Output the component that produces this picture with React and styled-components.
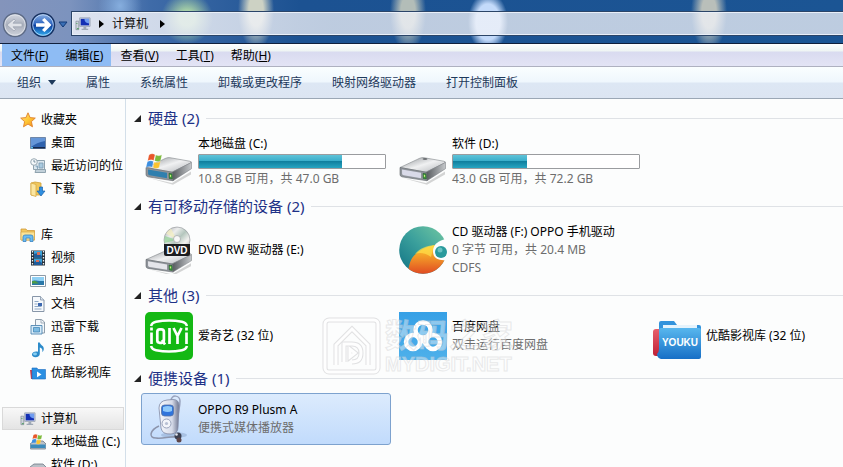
import React from 'react'
import styled, { createGlobalStyle } from 'styled-components'

/* ---------- icons ---------- */

const BackIcon = () => (
    <svg width="26" height="26" viewBox="0 0 26 26">
        <defs>
            <linearGradient id="back" x1="0" y1="0" x2="0" y2="1">
                <stop offset="0" stopColor="#d5d9e2" />
                <stop offset=".5" stopColor="#a9afbc" />
                <stop offset="1" stopColor="#cfd3dc" />
            </linearGradient>
        </defs>
        <circle cx="13" cy="13" r="11.5" fill="url(#back)" stroke="#5d6b86" strokeWidth="1.4" />
        <circle cx="13" cy="13" r="10.2" fill="none" stroke="#e8ebf1" strokeOpacity=".7" />
        <path d="M5 13l7-6 1.500 1.500-2.500 2.700h9v3.600h-9l2.500 2.700L12 19z" fill="#dfe2e8" stroke="#9aa1af" strokeWidth=".7" />
    </svg>
)

const ForwardIcon = () => (
    <svg width="26" height="26" viewBox="0 0 26 26">
        <defs>
            <linearGradient id="fwd" x1="0" y1="0" x2="0" y2="1">
                <stop offset="0" stopColor="#8fb4e6" />
                <stop offset=".45" stopColor="#2f66c0" />
                <stop offset=".52" stopColor="#0e3f9e" />
                <stop offset="1" stopColor="#35b5f5" />
            </linearGradient>
        </defs>
        <circle cx="13" cy="13" r="11.5" fill="url(#fwd)" stroke="#16305f" strokeWidth="1.4" />
        <circle cx="13" cy="13" r="10.3" fill="none" stroke="#cfe3fb" strokeOpacity=".75" />
        <path d="M21.500 13L14.500 6l-2.500 2 3 3.200H6v3.600h9L12 18l2.500 2z" fill="#fff" />
    </svg>
)

const HistoryIcon = () => (
    <svg width="10" height="7" viewBox="0 0 10 7">
        <path d="M1 1h8L5 6z" fill="#3a6fb5" stroke="#123a78" />
    </svg>
)

const ComputerIcon = () => (
    <svg width="16" height="16" viewBox="0 0 17 16">
        <path d="M1 5h3v9H1z" fill="#cfd5dc" stroke="#7b8694" strokeWidth=".7" />
        <path d="M2 7v1M2 13h2" stroke="#3b9a4a" strokeWidth="1" />
        <path d="M5 1.5h11v9H5z" fill="#dfe4ea" stroke="#8a96a8" strokeWidth=".8" />
        <path d="M6 2.5h9v7H6z" fill="#1430b4" />
        <path d="M10 2.5h5v5c-3 0-5-2-5-5z" fill="#6f9cf0" />
        <path d="M9 11h3v2H9zM7 13h7v1.5H7z" fill="#9fa9b6" />
    </svg>
)

const StarIcon = () => (
    <svg width="16" height="16" viewBox="0 0 16 16">
        <defs>
            <linearGradient id="star" x1="0" y1="0" x2="1" y2="1">
                <stop offset="0" stopColor="#ffe08a" />
                <stop offset=".5" stopColor="#ffc835" />
                <stop offset="1" stopColor="#f08a1c" />
            </linearGradient>
        </defs>
        <path
            d="M8 .8l2.1 4.8 5.2.5-3.9 3.5 1.1 5.2L8 12.1l-4.5 2.7 1.1-5.2L.7 6.1l5.2-.5z"
            fill="url(#star)"
            stroke="#e0802a"
            strokeWidth=".9"
        />
    </svg>
)

const DesktopIcon = () => (
    <svg width="16" height="16" viewBox="0 0 16 16">
        <path d="M.5 2.5h15v11H.5z" fill="#2f62ad" stroke="#6f87a8" />
        <path d="M1 3h14v3C9 7 5 9 1 12z" fill="#6596d8" />
        <path d="M1 12h14v1.5H1z" fill="#16294d" />
        <path d="M1 12h2v1.5H1z" fill="#5fc0e8" />
    </svg>
)

const RecentIcon = () => (
    <svg width="16" height="16" viewBox="0 0 16 16">
        <path d="M3.5 2.5h11v9h-11z" fill="#dbe7ee" stroke="#8fa3af" />
        <path d="M5 14.5h10.500v-3H6z" fill="#c2d1da" stroke="#8fa3af" />
        <path d="M9 5h4v5H9zM5.500 8h2v3" fill="#a9cbe0" stroke="#7c9bb0" strokeWidth=".8" />
        <circle cx="4" cy="4" r="3.300" fill="#f4f8fa" stroke="#9aaab4" />
        <path d="M4 2v2h1.500" fill="none" stroke="#5d7a8c" strokeWidth=".8" />
    </svg>
)

const DownloadIcon = () => (
    <svg width="16" height="16" viewBox="0 0 16 16">
        <path d="M1 2l4-1 6 1v12H1z" fill="#f0c75c" stroke="#cf9f35" strokeWidth=".8" />
        <path d="M1 2l5 1.500V15.500L1 14z" fill="#fbe6a0" stroke="#d8ab45" strokeWidth=".8" />
        <path d="M9.500 6h3v4H15l-4 5-4-5h2.500z" fill="#2f8fe0" stroke="#1b62ab" strokeWidth=".7" />
    </svg>
)

const LibraryIcon = () => (
    <svg width="16" height="16" viewBox="0 0 16 16">
        <path d="M1 2h5l1 1.500h7.500V13H1z" fill="#f2c860" stroke="#d09b38" strokeWidth=".8" />
        <path d="M1 5h13.500v8H1z" fill="#fbe396" stroke="#d9a94a" strokeWidth=".7" />
        <path d="M3 14.500V10q0-2 2-2h6q2 0 2 2v4.500h-3V11H6v3.500z" fill="#6cbcf0" stroke="#3784c4" strokeWidth=".8" />
    </svg>
)

const VideoIcon = () => (
    <svg width="16" height="16" viewBox="0 0 16 16">
        <path d="M1 .5h14v15H1z" fill="#26313a" />
        <path d="M4 1h8v6.500H4zM4 8.500h8V15H4z" fill="#3aa1d8" />
        <path d="M4 4l4-1 4 3v1.500H4zM4 12l4-2 4 3v2H4z" fill="#1f5c9a" />
        <path d="M7 2h3v3H7zM6 10h3v2H6z" fill="#d5705a" />
        <path d="M2.500 1v14M13.500 1v14" stroke="#eef2f4" strokeWidth="1.300" strokeDasharray="1.500 1.500" />
    </svg>
)

const PictureIcon = () => (
    <svg width="16" height="16" viewBox="0 0 16 16">
        <path d="M.5 2.500h15v11H.5z" fill="#fff" stroke="#8d9aa6" />
        <path d="M2 4h12v8H2z" fill="#8fd0f4" />
        <path d="M2 8c3-1.500 6 .5 12 0v4H2z" fill="#2a78a8" />
        <path d="M2 8.500c3-2 5 1 7 2H2z" fill="#4c9c46" />
    </svg>
)

const DocumentIcon = () => (
    <svg width="16" height="16" viewBox="0 0 16 16">
        <path d="M2.500.5h8l3.500 3.500v11.500H2.500z" fill="#f6f9fc" stroke="#8796a8" />
        <path d="M10.500.5V4H14" fill="#dce5ee" stroke="#8796a8" strokeWidth=".8" />
        <path d="M4.500 5.500h4M4.500 8h3M4.500 10.500h7M4.500 13h7" stroke="#8fa8c4" />
        <path d="M8 7h4v3H8z" fill="#3c68b0" />
    </svg>
)

const ThunderIcon = () => (
    <svg width="16" height="16" viewBox="0 0 16 16">
        <path d="M5.500.5h6L14.500 3v11h-9z" fill="#f3f7fa" stroke="#8e9dab" />
        <path d="M11 .5V4h3.500" fill="none" stroke="#8e9dab" strokeWidth=".8" />
        <path d="M1 6.500h11v8.500H1z" fill="#d7ebf8" stroke="#4f87b2" strokeWidth=".9" />
        <path d="M3.500 8.500h6v4.500h-6z" fill="#7dbbe2" stroke="#3b7fb0" strokeWidth=".7" />
    </svg>
)

const MusicIcon = () => (
    <svg width="16" height="16" viewBox="0 0 16 16">
        <path d="M8 .5h1.800c.2 2.500 4.200 3 4 6.500-.1 1.500-.8 2.500-1.600 3 .8-2.800-.5-4-2.400-4.600v6.400c0 2-1.800 3.400-4.300 3.400S1.800 14 2 12.300c.2-1.900 2.700-3.300 6-2.600z" fill="#2c8bca" />
        <ellipse cx="5" cy="12" rx="2" ry="1.400" fill="#85cdf2" />
    </svg>
)

const YoukuFolderIcon = () => (
    <svg width="16" height="16" viewBox="0 0 16 16">
        <path d="M0 5h6v9H1z" fill="#d33b46" />
        <path d="M2 3h5l1 1.500h7.500V14H2z" fill="#2b8fe2" stroke="#1b6cc0" strokeWidth=".6" />
        <path d="M7 6.500l4.500 3L7 12.300z" fill="#fff" />
    </svg>
)

/** the four coloured panes on the system drive */
const WindowsFlag = () => (
    <g stroke="#fff" strokeOpacity=".5" strokeWidth=".4">
        <path d="M5 3c2-1.500 4-1.500 6-.3L9.700 8.500C8 7.400 6 7.500 3.700 8.800z" fill="#e8572a" />
        <path d="M11.800 3c2 1 4 1 6-.2l-1.200 5.700c-2 1.300-4 1.400-6 .3z" fill="#7dbb3c" />
        <path d="M3.400 9.800c2.200-1.300 4.200-1.300 6-.3l-1.300 5.700c-1.800-1-3.800-.9-6.100.3z" fill="#3b8ee0" />
        <path d="M10.300 9.900c2 1 4 1 6.100-.3l-1.300 5.800c-2 1.300-4 1.300-6.100.2z" fill="#fbc32e" />
    </g>
)

const SmallDriveIcon = ({ system }) => (
    <svg width="16" height="16" viewBox="0 0 16 16">
        <path d="M0 10l4-3h9l3 3v4q0 1-1 1H1q-1 0-1-1z" fill="#b9c0c7" stroke="#6e7a86" strokeWidth=".8" />
        <path d="M.5 10.500h15V14H.5z" fill={system ? '#3c8bbb' : '#e6e9ec'} />
        {system && <g transform="translate(0 -1) scale(.68)"><WindowsFlag /></g>}
    </svg>
)

const DriveBody = ({ id, front }) => (
    <>
        <defs>
            <linearGradient id={id} x1="0" y1="0" x2="1" y2="1">
                <stop offset="0" stopColor="#8e9296" />
                <stop offset=".5" stopColor="#f0f1f2" />
                <stop offset="1" stopColor="#b1b4b8" />
            </linearGradient>
            <linearGradient id={id + 's'} x1="0" y1="0" x2="1" y2="0">
                <stop offset="0" stopColor="#55595d" />
                <stop offset="1" stopColor="#c5c8cb" />
            </linearGradient>
        </defs>
        <path d="M3 38l24 7 19-15v4L28 47z" fill="#000" opacity=".16" />
        <path d="M1 25L21 13q2-1 4-.6L45 17q2 .6 1 2L27 31z" fill={`url(#${id})`} stroke="#85898d" strokeWidth=".7" />
        <path d="M27 31L46.500 18.500v8L28 42z" fill={`url(#${id}s)`} stroke="#777b80" strokeWidth=".6" />
        <path d="M1 25l26 6 1 11-25-5q-2-.6-2-3z" fill="#8f949a" stroke="#666b70" strokeWidth=".7" />
        <path d="M3 27.500l19 4.200v7L4.600 35q-1.400-.4-1.500-2z" fill={front} />
        <path d="M24 32.500l3 .7.300 6.500-3-.6z" fill="#3f9a3f" stroke="#1e5222" strokeWidth=".6" />
        <path d="M25.500 34.500v2.500" stroke="#c9f27a" strokeWidth="1.200" />
    </>
)

const DriveIcon = ({ system }) => (
    <svg width="48" height="48" viewBox="0 0 48 48">
        <g transform="translate(0 10) scale(1 .78)">
            <DriveBody id={system ? 'dc' : 'dd'} front={system ? '#2f7fae' : '#d9dae8'} />
            {!system && <ellipse cx="26" cy="14" rx="2.500" ry="1" fill="#4d5156" />}
        </g>
        {system && <g transform="translate(-1 14) scale(1)"><WindowsFlag /></g>}
    </svg>
)

const DvdIcon = () => (
    <svg width="48" height="48" viewBox="0 0 48 48">
        <defs>
            <linearGradient id="disc" x1="0" y1="0" x2="1" y2="1">
                <stop offset="0" stopColor="#a6a9ac" />
                <stop offset=".3" stopColor="#eceded" />
                <stop offset=".5" stopColor="#b4c6bd" />
                <stop offset=".7" stopColor="#f2f1ef" />
                <stop offset="1" stopColor="#9c9fa2" />
            </linearGradient>
        </defs>
        <g transform="translate(0 15) scale(1 .74)"><DriveBody id="dv" front="#e4e5ea" /></g>
        <circle cx="32" cy="14" r="13" fill="url(#disc)" stroke="#8b8f93" strokeWidth=".6" />
        <path d="M32 14L21 7.500A13 13 0 0 1 26 2.700z" fill="#f5efbf" opacity=".7" />
        <path d="M32 14l-12.500 3a13 13 0 0 1 .5-7z" fill="#8fd093" opacity=".7" />
        <circle cx="32" cy="13" r="3.500" fill="#f7f7f7" stroke="#a6a9ac" strokeWidth=".8" />
        <path d="M19 18h26v10q0 2-2 2H21q-2 0-2-2z" fill="#1c1d20" />
        <text x="32" y="28" textAnchor="middle" fontFamily="Liberation Sans" fontWeight="700" fontSize="10" fill="#fff">DVD</text>
    </svg>
)

const OppoIcon = () => (
    <svg width="48" height="48" viewBox="0 0 48 48">
        <defs>
            <linearGradient id="teal" x1="0" y1="1" x2="1" y2="0">
                <stop offset="0" stopColor="#0f7183" />
                <stop offset=".5" stopColor="#3a9f9c" />
                <stop offset="1" stopColor="#74c9a2" />
            </linearGradient>
            <linearGradient id="sun" x1="0" y1="0" x2="0" y2="1">
                <stop offset="0" stopColor="#ffd02c" />
                <stop offset="1" stopColor="#e04a22" />
            </linearGradient>
            <clipPath id="globe"><circle cx="24" cy="24" r="23.800" /></clipPath>
        </defs>
        <g clipPath="url(#globe)">
            <path d="M0 0h48v48H0z" fill="url(#teal)" />
            <path d="M9 46c1-8 3-15 9-19 6-5 10-6 18-8h12v29H9z" fill="url(#sun)" />
            <path d="M16 28c5-6 11-8 19-9l-3 12c-5-4-11-5-16-3z" fill="#ffe04a" opacity=".7" />
        </g>
        <path d="M48 13c-9 1-14 6-14 12 0 7 5 10 14 9z" fill="#fcfdfd" />
        <circle cx="42" cy="26" r="6" fill="#2a9a9c" />
        <circle cx="41" cy="24" r="2.500" fill="#69c2c2" />
    </svg>
)

const IqiyiIcon = () => (
    <svg width="48" height="48" viewBox="0 0 48 48">
        <rect width="48" height="48" rx="5" fill="#14b814" />
        <path d="M6 14q1-3.500 5-4.200 13-2.500 26 0 4 .7 5 4.200M6 34q1 3.500 5 4.200 13 2.500 26 0 4-.7 5-4.200" fill="none" stroke="#fff" strokeWidth="2.500" />
        <g fill="none" stroke="#fff" strokeWidth="2.700">
            <path d="M6.500 20.500V32M6.500 15.500v3" />
            <rect x="12.300" y="17.300" width="6.600" height="13.500" rx="2.500" />
            <path d="M17 28l3 4.500M24.500 16v16M28.500 16l4 8 4-8M32.500 23v9M41.500 20.500V32M41.500 15.500v3" />
        </g>
    </svg>
)

const BaiduPanIcon = () => (
    <svg width="48" height="48" viewBox="0 0 48 48">
        <defs>
            <linearGradient id="pan" x1="0" y1="0" x2="0" y2="1">
                <stop offset="0" stopColor="#35a0e6" />
                <stop offset="1" stopColor="#4db0ea" />
            </linearGradient>
        </defs>
        <rect width="48" height="48" fill="url(#pan)" />
        <g fill="none" stroke="#fff" strokeWidth="4.500">
            <circle cx="24" cy="18" r="7.500" />
            <circle cx="14" cy="30" r="7" />
            <circle cx="34" cy="30" r="7" />
        </g>
        <path d="M18 23l12 12" stroke="#fff" strokeWidth="4" />
    </svg>
)

const YoukuIcon = () => (
    <svg width="48" height="48" viewBox="0 0 48 48">
        <defs>
            <linearGradient id="yk" x1="0" y1="0" x2="0" y2="1">
                <stop offset="0" stopColor="#58b7ee" />
                <stop offset="1" stopColor="#176fc6" />
            </linearGradient>
            <linearGradient id="ykr" x1="0" y1="0" x2="0" y2="1">
                <stop offset="0" stopColor="#e8606c" />
                <stop offset="1" stopColor="#bf2036" />
            </linearGradient>
        </defs>
        <path d="M0 20q0-3 3-3h12v27H3q-3 0-3-3z" fill="url(#ykr)" />
        <path d="M6 11q0-2 2-2h13l3 4h22q2 0 2 2v20H6z" fill="#3393dc" />
        <path d="M10 13h34v8H10z" fill="#e5f3fc" />
        <path d="M6 18q0-2 2-2h38q2 0 2 2v27q0 2-2 2H8q-4-1-4-5 2-2 2-5z" fill="url(#yk)" />
        <text x="27" y="34" textAnchor="middle" fontFamily="Liberation Sans" fontWeight="700" fontSize="10" fill="#fff">YOUKU</text>
    </svg>
)

const PlayerIcon = () => (
    <svg width="48" height="48" viewBox="0 0 48 48">
        <defs>
            <linearGradient id="mp" x1="0" y1="0" x2="1" y2="0">
                <stop offset="0" stopColor="#f6f8fc" />
                <stop offset=".65" stopColor="#d7dcea" />
                <stop offset="1" stopColor="#6f7690" />
            </linearGradient>
        </defs>
        <ellipse cx="29" cy="40" rx="13" ry="3" fill="#4e6a98" opacity=".25" />
        <path d="M26 6c0-7 9-6 9 0 0 7-2 11-2 16" fill="none" stroke="#98a2bd" strokeWidth="1.500" />
        <path d="M14 13q0-7 8-8l6-.5q6 0 6 6l-1 22q0 6-7 6.500-9 .5-10-6z" fill="url(#mp)" stroke="#8089a4" strokeWidth=".8" />
        <rect x="16.500" y="10" width="12" height="11" rx="3" fill="#2f74dc" stroke="#5672a4" strokeWidth=".8" />
        <path d="M18 12q5-2 9 0v4q-4 2-9 0z" fill="#8fc9fb" />
        <circle cx="21.500" cy="28.500" r="4.500" fill="#f3f5fa" stroke="#9aa3bb" />
        <circle cx="21.500" cy="28.500" r="1.600" fill="#b8c0d4" />
        <path d="M14 31c-9 4-11 12-3 12 8 1 13-2 22-1" fill="none" stroke="#8c94ab" strokeWidth="1.500" />
        <circle cx="33" cy="41" r="3.500" fill="#3b3f50" />
        <circle cx="34" cy="45" r="2.500" fill="#5d4548" />
        <circle cx="31.500" cy="39.500" r="1.300" fill="#e6e9f2" />
    </svg>
)

const WatermarkLogo = () => (
    <svg width="60" height="60" viewBox="0 0 60 60" fill="none">
        <g stroke="#d6d6d8" strokeWidth="5">
            <rect x="3" y="3" width="53" height="52" rx="4" />
            <path d="M14 48V28L30 12l16 16v20" />
            <path d="M22 45V27h8q9 0 9 9t-9 9M28 32v8l5-4z" />
        </g>
        <g stroke="#fff" strokeWidth="3">
            <rect x="3" y="3" width="53" height="52" rx="4" />
            <path d="M14 48V28L30 12l16 16v20" />
            <path d="M22 45V27h8q9 0 9 9t-9 9M28 32v8l5-4z" />
        </g>
    </svg>
)

/* ---------- data ---------- */

const menus = [
    { text: '文件', mnemonic: 'F', active: true },
    { text: '编辑', mnemonic: 'E', active: true },
    { text: '查看', mnemonic: 'V' },
    { text: '工具', mnemonic: 'T' },
    { text: '帮助', mnemonic: 'H' },
]

const commands = ['属性', '系统属性', '卸载或更改程序', '映射网络驱动器', '打开控制面板']

const sidebarGroups = [
    {
        icon: <StarIcon />,
        text: '收藏夹',
        items: [
            { icon: <DesktopIcon />, text: '桌面' },
            { icon: <RecentIcon />, text: '最近访问的位' },
            { icon: <DownloadIcon />, text: '下载' },
        ],
    },
    {
        icon: <LibraryIcon />,
        text: '库',
        items: [
            { icon: <VideoIcon />, text: '视频' },
            { icon: <PictureIcon />, text: '图片' },
            { icon: <DocumentIcon />, text: '文档' },
            { icon: <ThunderIcon />, text: '迅雷下载' },
            { icon: <MusicIcon />, text: '音乐' },
            { icon: <YoukuFolderIcon />, text: '优酷影视库' },
        ],
    },
    {
        icon: <ComputerIcon />,
        text: '计算机',
        current: true,
        items: [
            { icon: <SmallDriveIcon system />, text: '本地磁盘 (C:)' },
            { icon: <SmallDriveIcon />, text: '软件 (D:)' },
        ],
    },
]

const deviceGroups = [
    {
        title: '硬盘 (2)',
        items: [
            { icon: <DriveIcon system />, name: '本地磁盘 (C:)', used: 77, info: ['10.8 GB 可用，共 47.0 GB'] },
            { icon: <DriveIcon />, name: '软件 (D:)', used: 40, info: ['43.0 GB 可用，共 72.2 GB'] },
        ],
    },
    {
        title: '有可移动存储的设备 (2)',
        items: [
            { icon: <DvdIcon />, name: 'DVD RW 驱动器 (E:)' },
            { icon: <OppoIcon />, name: 'CD 驱动器 (F:) OPPO 手机驱动', info: ['0 字节 可用，共 20.4 MB', 'CDFS'] },
        ],
    },
    {
        title: '其他 (3)',
        watermark: true,
        items: [
            { icon: <IqiyiIcon />, name: '爱奇艺 (32 位)' },
            { icon: <BaiduPanIcon />, name: '百度网盘', info: ['双击运行百度网盘'] },
            { icon: <YoukuIcon />, name: '优酷影视库 (32 位)' },
        ],
    },
    {
        title: '便携设备 (1)',
        items: [
            { icon: <PlayerIcon />, name: 'OPPO R9 Plusm A', info: ['便携式媒体播放器'], selected: true },
        ],
    },
]

/* ---------- parts ---------- */

const Device = ({ item }) => (
    <DeviceTile $selected={item.selected}>
        {item.icon}
        <DeviceText>
            <DeviceName>{item.name}</DeviceName>
            {item.used && (
                <CapacityBar role="progressbar" aria-label={item.name} aria-valuenow={item.used}>
                    <CapacityFill style={{ width: `${item.used}%` }} />
                </CapacityBar>
            )}
            {item.info?.map(line => <DeviceInfo key={line}>{line}</DeviceInfo>)}
        </DeviceText>
    </DeviceTile>
)

const App = () => {
    return (
        <Window>
            <GlobalStyle />
            <TitleBar>
                <NavButton aria-label="后退"><BackIcon /></NavButton>
                <NavButton aria-label="前进"><ForwardIcon /></NavButton>
                <NavButton aria-label="最近的页面"><HistoryIcon /></NavButton>
                <AddressBar>
                    <ComputerIcon />
                    <Arrow />
                    <Crumb>计算机</Crumb>
                    <Arrow />
                </AddressBar>
            </TitleBar>
            <MenuBar>
                {menus.map(menu => (
                    <MenuButton key={menu.text} $active={menu.active}>
                        {menu.text}(<u>{menu.mnemonic}</u>)
                    </MenuButton>
                ))}
            </MenuBar>
            <Toolbar>
                <ToolButton>组织<DownArrow /></ToolButton>
                {commands.map(text => <ToolButton key={text}>{text}</ToolButton>)}
            </Toolbar>
            <Body>
                <Sidebar>
                    {sidebarGroups.map(group => (
                        <SidebarGroup key={group.text}>
                            <SidebarRow $root $current={group.current}>{group.icon}{group.text}</SidebarRow>
                            {group.items.map(item => (
                                <SidebarRow key={item.text}>{item.icon}{item.text}</SidebarRow>
                            ))}
                        </SidebarGroup>
                    ))}
                </Sidebar>
                <Content>
                    {deviceGroups.map(group => (
                        <Group key={group.title}>
                            <GroupHeader><Expander />{group.title}<Rule /></GroupHeader>
                            <DeviceGrid>
                                {group.items.map(item => <Device key={item.name} item={item} />)}
                            </DeviceGrid>
                            {group.watermark && (
                                <Watermark>
                                    <WatermarkLogo />
                                    <div>
                                        <WatermarkName>数码之家</WatermarkName>
                                        <WatermarkSite>MYDIGIT.NET</WatermarkSite>
                                    </div>
                                </Watermark>
                            )}
                        </Group>
                    ))}
                </Content>
            </Body>
        </Window>
    )
}

export default App

const GlobalStyle = createGlobalStyle`
    * {
        box-sizing: border-box;
    }

    body {
        margin: 0;
        font-family: "Noto Sans", "Noto Sans CJK SC", sans-serif;
        font-size: 12px;
        line-height: 18px;
        color: #000;
    }

    button {
        border: 0;
        padding: 0;
        background: none;
        font: inherit;
        color: inherit;
    }

    svg {
        display: block;
        flex: none;
    }
`

const Window = styled.div`
    display: flex;
    flex-direction: column;
    height: 100vh;
    overflow: hidden;
    background: #fcfdfd;
`

const TitleBar = styled.header`
    display: flex;
    align-items: center;
    gap: 2px;
    height: 44px;
    flex: none;
    padding: 6px 0 0 2px;
    border-bottom: 1px solid #10203c;
    background:
        radial-gradient(ellipse 22px 26px at 120px 6px, #86aede, transparent),
        radial-gradient(ellipse 26px 26px at 187px 18px, #a5cfa6 30%, transparent),
        radial-gradient(ellipse 18px 40px at 256px 10px, #cdd2c4 40%, transparent),
        radial-gradient(ellipse 18px 40px at 408px 12px, #b3bdb8 40%, transparent),
        radial-gradient(ellipse 20px 30px at 488px 22px, #c3dafa 60%, transparent),
        radial-gradient(ellipse 18px 40px at 709px 12px, #b9bfba 40%, transparent),
        linear-gradient(90deg, #8494bb 0, #7c93be 70px, #3f6ba8 150px, #1c5292 300px, #1b5594 100%);
`

const NavButton = styled.button`
    display: grid;
    place-items: center;
`

const AddressBar = styled.nav`
    display: flex;
    align-items: center;
    gap: 8px;
    flex: 1;
    height: 23px;
    margin: 0 0 2px 2px;
    padding-left: 2px;
    border: 1px solid #e9eff8;
    border-right: 0;
    outline: 1px solid #2b4568;
    background: linear-gradient(90deg, rgba(240, 242, 248, 0.85) 0, rgba(240, 242, 248, 0.76) 260px);
`

const Arrow = styled.span`
    border: 4px solid transparent;
    border-left: 5px solid #000;
    border-right: 0;
`

const Crumb = styled.button`
    padding-right: 4px;
    color: #111;
`

const MenuBar = styled.nav`
    display: flex;
    height: 23px;
    flex: none;
    padding-left: 2px;
    border-bottom: 1px solid #aeb1c0;
    background: linear-gradient(#fff 0, #eef5f4 7px, #d9dbf0 8px, #e3e4f5 100%);
`

const MenuButton = styled.button`
    padding: 2px 8px 0 9px;
    background: ${({ $active }) => ($active ? '#8ebcf4' : 'none')};
`

const Toolbar = styled.div`
    display: flex;
    align-items: center;
    gap: 30px;
    height: 32px;
    flex: none;
    padding-left: 17px;
    border-bottom: 1px solid #9ba7b5;
    color: #1e395b;
    background: linear-gradient(#fafeff 0, #eff7fd 15px, #dde7f4 16px, #dce5f2 100%);
`

const ToolButton = styled.button`
    display: flex;
    align-items: center;
    gap: 7px;
    white-space: nowrap;
`

const DownArrow = styled.span`
    border: 4px solid transparent;
    border-top: 5px solid #1e395b;
    border-bottom: 0;
`

const Body = styled.div`
    display: flex;
    flex: 1;
    min-height: 0;
`

const Sidebar = styled.aside`
    display: flex;
    flex-direction: column;
    gap: 23px;
    width: 126px;
    flex: none;
    padding: 9px 1px 0 2px;
    overflow: hidden;
    border-right: 1px solid #d3dfe9;
`

const SidebarGroup = styled.div`
    display: flex;
    flex-direction: column;
`

const SidebarRow = styled.button`
    display: flex;
    align-items: center;
    gap: 5px;
    height: 23px;
    flex: none;
    padding-left: ${({ $root }) => ($root ? '17px' : '27px')};
    border: 1px solid ${({ $current }) => ($current ? '#d9d9d9' : 'transparent')};
    background: ${({ $current }) => ($current ? 'linear-gradient(#f8f8f8, #e4e4e4)' : 'none')};
    white-space: nowrap;
`

const Content = styled.main`
    flex: 1;
    min-width: 0;
    padding: 7px 0 0 8px;
    overflow: hidden;
`

const Group = styled.section`
    position: relative;
    padding-bottom: 4px;
`

const GroupHeader = styled.h2`
    display: flex;
    align-items: center;
    gap: 7px;
    height: 24px;
    margin: 0 0 3px;
    font-size: 15px;
    font-weight: 400;
    color: #1e3287;
    white-space: nowrap;
`

const Expander = styled.span`
    border-left: 7px solid transparent;
    border-bottom: 7px solid #222;
`

const Rule = styled.span`
    flex: 1;
    height: 1px;
    background: #dfe2e6;
`

const DeviceGrid = styled.div`
    display: grid;
    grid-template-columns: 250px 250px 1fr;
    column-gap: 4px;
    padding-left: 7px;
`

const DeviceTile = styled.div`
    display: flex;
    align-items: center;
    gap: 5px;
    min-height: 52px;
    padding: 1px 4px 1px 3px;
    border: 1px solid ${({ $selected }) => ($selected ? '#7da2ce' : 'transparent')};
    border-radius: 3px;
    background: ${({ $selected }) => ($selected ? 'linear-gradient(#dcebfd, #c1dbfc)' : 'none')};
`

const DeviceText = styled.div`
    flex: 1;
    min-width: 0;
    white-space: nowrap;
`

const DeviceName = styled.div``

const DeviceInfo = styled.div`
    color: #6d6d6d;
`

const CapacityBar = styled.div`
    height: 15px;
    margin: 1px 0;
    border: 1px solid #9a9c9f;
    border-radius: 1px;
    background: #fff;
`

const CapacityFill = styled.div`
    height: 100%;
    background: linear-gradient(#5fc3d8 0, #3aaecb 45%, #11809f 50%, #28a5c2 100%);
`

/** stamped over the tiles, lets clicks through */
const Watermark = styled.div`
    position: absolute;
    left: 188px;
    top: 34px;
    display: flex;
    gap: 3px;
    pointer-events: none;
    opacity: 0.7;
    color: rgba(255, 255, 255, 0.6);
    -webkit-text-stroke: 1px rgba(205, 205, 208, 0.6);
`

const WatermarkName = styled.div`
    font-size: 32px;
    font-weight: 700;
    line-height: 35px;
`

const WatermarkSite = styled.div`
    font: 700 20px/24px "Liberation Sans", sans-serif;
`
